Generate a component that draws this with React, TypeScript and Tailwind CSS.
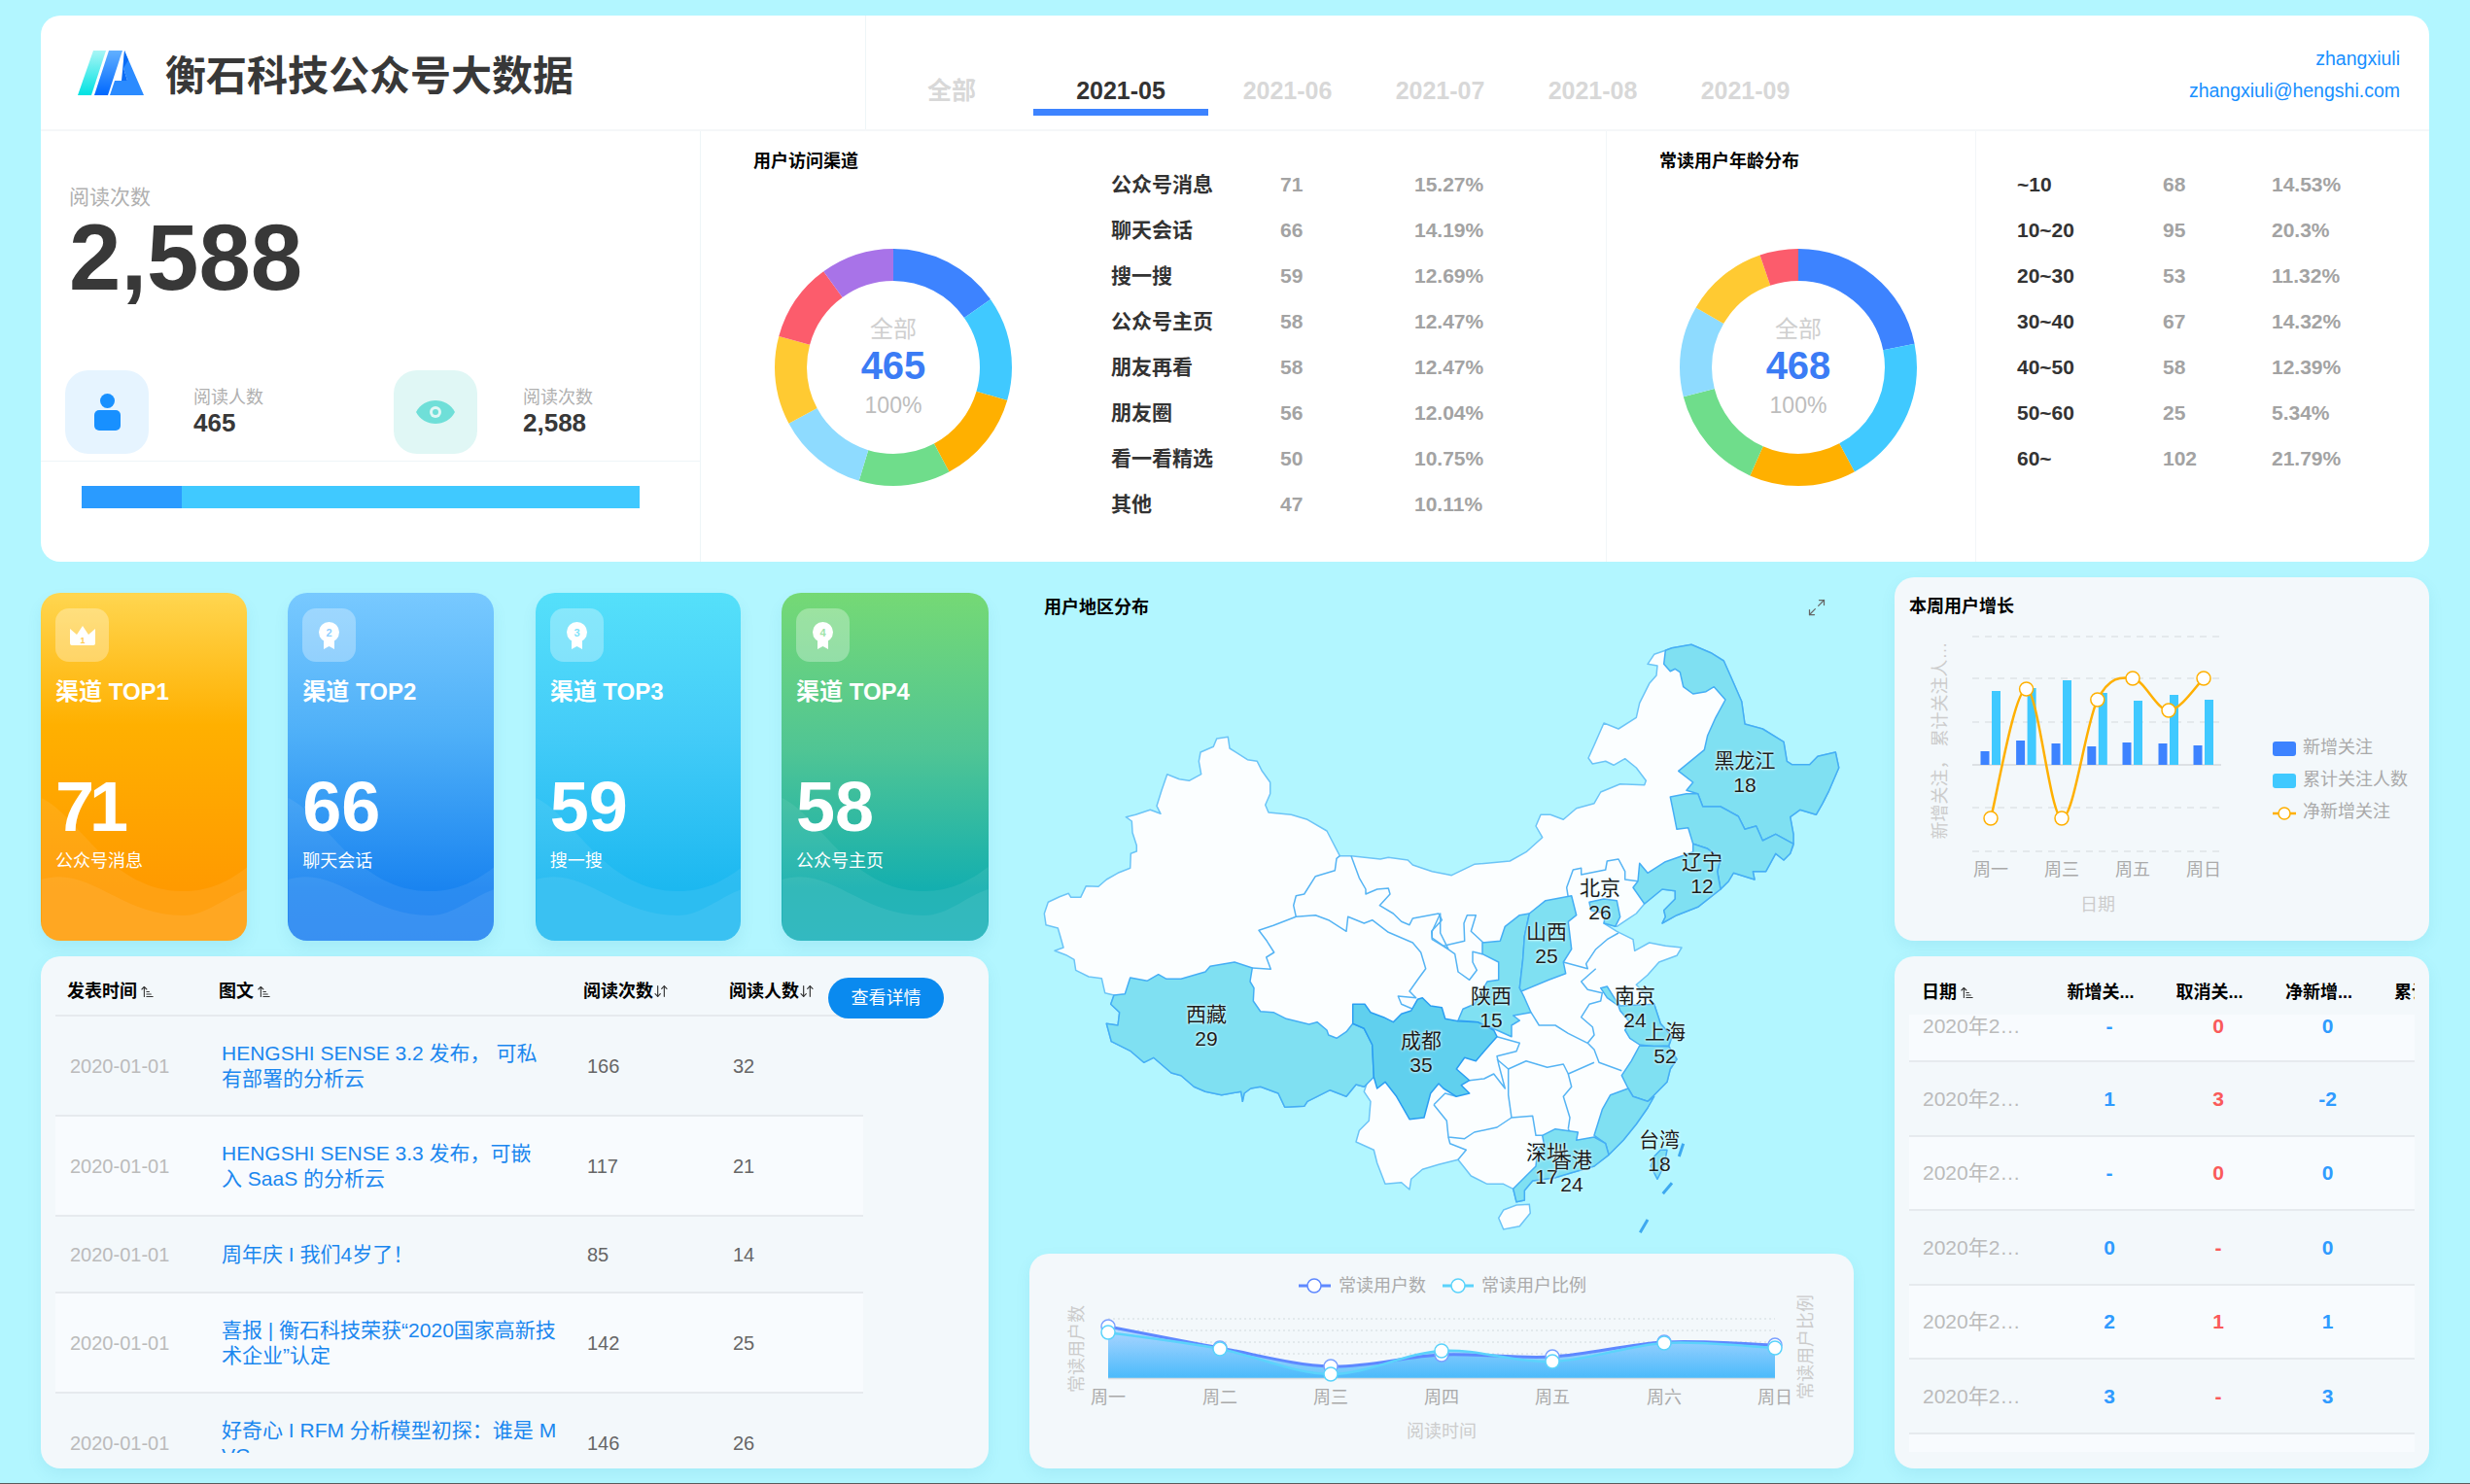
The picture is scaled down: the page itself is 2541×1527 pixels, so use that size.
import { ArrowDownUp, ArrowUpNarrowWide, Maximize2 } from "lucide-react";

const channels = [
  { name: "公众号消息", value: 71, pct: "15.27%", color: "#3d83ff" },
  { name: "聊天会话", value: 66, pct: "14.19%", color: "#40c9ff" },
  { name: "搜一搜", value: 59, pct: "12.69%", color: "#ffb000" },
  { name: "公众号主页", value: 58, pct: "12.47%", color: "#6fdd8b" },
  { name: "朋友再看", value: 58, pct: "12.47%", color: "#8edbff" },
  { name: "朋友圈", value: 56, pct: "12.04%", color: "#ffca32" },
  { name: "看一看精选", value: 50, pct: "10.75%", color: "#fc5c6c" },
  { name: "其他", value: 47, pct: "10.11%", color: "#a873e8" },
];

const ages = [
  { name: "~10", value: 68, pct: "14.53%" },
  { name: "10~20", value: 95, pct: "20.3%" },
  { name: "20~30", value: 53, pct: "11.32%" },
  { name: "30~40", value: 67, pct: "14.32%" },
  { name: "40~50", value: 58, pct: "12.39%" },
  { name: "50~60", value: 25, pct: "5.34%" },
  { name: "60~", value: 102, pct: "21.79%" },
];

const ageRing = [
  { value: 102, color: "#3d83ff" },
  { value: 95, color: "#40c9ff" },
  { value: 68, color: "#ffb000" },
  { value: 67, color: "#6fdd8b" },
  { value: 58, color: "#8edbff" },
  { value: 53, color: "#ffca32" },
  { value: 25, color: "#fc5c6c" },
];

const tops = [
  { rank: 1, value: 71, name: "公众号消息", w: "w-[212px]", track: "tracking-[-5px]", bg: "bg-[linear-gradient(180deg,#ffd650_0%,#ffb000_38%,#ff9a00_85%,#ff9a00_100%)]", num: "#ffc94f" },
  { rank: 2, value: 66, name: "聊天会话", w: "w-[212px]", track: "", bg: "bg-[linear-gradient(180deg,#78c9ff_0%,#4fb0f8_40%,#1a84f0_85%,#1a7ff0_100%)]", num: "#8fd0ff" },
  { rank: 3, value: 59, name: "搜一搜", w: "w-[211px]", track: "", bg: "bg-[linear-gradient(180deg,#55e0fa_0%,#44ccf8_40%,#1cb8f0_85%,#1cb8f0_100%)]", num: "#7fe4fa" },
  { rank: 4, value: 58, name: "公众号主页", w: "w-[213px]", track: "", bg: "bg-[linear-gradient(180deg,#75d975_0%,#50c594_45%,#14afaf_85%,#14afb8_100%)]", num: "#a0e4a8" },
];

const articles = [
  { title: "HENGSHI SENSE 3.2 发布， 可私\n有部署的分析云", reads: 166, people: 32, h: "h-[103px] bg-transparent" },
  { title: "HENGSHI SENSE 3.3 发布，可嵌\n入 SaaS 的分析云", reads: 117, people: 21, h: "h-[103px] bg-[#f8fbfe]" },
  { title: "周年庆 I 我们4岁了！", reads: 85, people: 14, h: "h-[79px] bg-transparent" },
  { title: "喜报 | 衡石科技荣获“2020国家高新技\n术企业”认定", reads: 142, people: 25, h: "h-[103px] bg-[#f8fbfe]" },
  { title: "好奇心 I RFM 分析模型初探：谁是 M\nVC", reads: 146, people: 26, h: "h-[103px] bg-transparent" },
];

const growthRows = [
  { a: "-", b: "0", c: "0", h: "h-[49px] items-start bg-[#f8fbfe]" },
  { a: "1", b: "3", c: "-2", h: "h-[77px] items-center" },
  { a: "-", b: "0", c: "0", h: "h-[76px] items-center bg-[#f8fbfe]" },
  { a: "0", b: "-", c: "0", h: "h-[77px] items-center" },
  { a: "2", b: "1", c: "1", h: "h-[76px] items-center bg-[#f8fbfe]" },
  { a: "3", b: "-", c: "3", h: "h-[77px] items-center" },
];

const mapLabels = [
  { n: "黑龙江", v: 18, c: "left-[736px] top-[201px]" },
  { n: "辽宁", v: 12, c: "left-[692px] top-[305px]" },
  { n: "北京", v: 26, c: "left-[587px] top-[332px]" },
  { n: "山西", v: 25, c: "left-[532px] top-[377px]" },
  { n: "南京", v: 24, c: "left-[623px] top-[443px]" },
  { n: "陕西", v: 15, c: "left-[475px] top-[443px]" },
  { n: "西藏", v: 29, c: "left-[182px] top-[462px]" },
  { n: "成都", v: 35, c: "left-[403px] top-[489px]" },
  { n: "上海", v: 52, c: "left-[654px] top-[480px]" },
  { n: "台湾", v: 18, c: "left-[648px] top-[591px]" },
  { n: "深圳", v: 17, c: "left-[532px] top-[604px]" },
  { n: "香港", v: 24, c: "left-[558px] top-[612px]" },
];

// crop coordinates (3x zooms of the map) to page coordinates
const at = (ox: number, oy: number, s: string) =>
  s
    .trim()
    .split(/\s+/)
    .map((p) => {
      const [x, y] = p.split(",").map(Number);
      return `${(ox + x / 3).toFixed(1)},${(oy + y / 3).toFixed(1)}`;
    })
    .join(" ");
const w = (s: string) => at(1070, 750, s);
const n = (s: string) => at(1480, 650, s);
const e = (s: string) => at(1400, 920, s);

const mainland = [
  w("580,25 585,60 640,95 670,100 685,130 710,165 710,200 695,235 705,258 775,265 825,280 885,315 925,392 960,392 1050,402 1075,397 1135,405 1150,420 1210,440 1260,450"),
  n("40,752 110,718 220,708 270,680 320,635 300,600 315,565 345,565 385,580 425,545 480,530 500,495 560,470 635,473 640,460 610,420 575,392 540,412 515,400 475,408 462,390 480,350 510,282 555,300 610,265 620,220 650,160 672,135 675,105 645,100 665,70 700,58 720,50 780,40 840,65 880,90 900,135 935,215 945,285 1000,300 1065,340 1075,400 1090,410 1145,410 1170,385 1225,372 1235,420 1205,490 1185,530 1165,565 1115,550 1085,572 1095,625 1095,660 1085,685 1065,705 1040,685 1010,740 970,740 975,765 910,745 895,770 870,795 800,850 735,875 690,900 700,880 695,860 730,825 730,800 690,795 635,840 610,870 580,890 550,910 510,900 550,925 600,950 605,985 650,960 700,970 750,975 735,1000 680,1020"),
  e("885,250 850,280 870,300 905,340 925,400 960,440 950,470 975,510 955,540 945,580 905,620 885,660 850,710 810,760 765,805 720,840 650,860 600,875 530,885 505,915 505,945 480,950 470,910 440,895 390,895 340,870 300,820 240,835 190,850 155,880 150,912 125,890 75,895 50,830 40,790 -15,765 -5,730 25,700 30,640 10,610 20,580"),
  w("1000,1105 975,1098 945,1135 895,1115 825,1150 815,1165 755,1168 735,1125 680,1105 650,1110 630,1125 625,1150 620,1120 560,1130 510,1120 475,1105 435,1070 405,1062 350,1015 320,1030 280,995 220,965 205,910 240,915 245,875 218,850 228,822 200,815 190,770 150,765 110,745 105,712 80,698 45,685 72,675 62,640 55,615 18,605 13,570 25,535 60,518 88,508 95,520 125,520 142,485 180,487 205,465 240,445 278,430 280,385 298,378 298,360 285,320 283,285 265,272 295,265 340,250 372,262 360,238 375,190 392,140 430,155 460,160 497,140 490,100 495,72 535,55 545,30"),
].join(" ");

const filled = [
  w("228,822 262,818 278,768 330,778 365,758 390,772 435,772 510,750 525,733 600,720 655,738 648,780 660,800 658,840 680,872 720,875 760,895 830,912 855,905 885,930 890,945 915,955 945,935 965,910 1000,925 1025,975 1030,1075 1000,1105 975,1098 945,1135 895,1115 825,1150 815,1165 755,1168 735,1125 680,1105 650,1110 630,1125 625,1150 620,1120 560,1130 510,1120 475,1105 435,1070 405,1062 350,1015 320,1030 280,995 220,965 205,910 240,915 245,875 218,850"),
  n("700,58 720,50 780,40 840,65 880,90 900,135 935,215 945,285 1000,300 1065,340 1075,400 1090,410 1145,410 1170,385 1225,372 1235,420 1205,490 1185,530 1165,565 1115,550 1085,572 1095,625 1095,655 1040,625 1000,645 980,600 945,610 925,570 870,540 815,540 800,500 765,490 785,465 740,430 820,365 830,320 855,265 885,210 850,170 825,185 785,192 755,170 745,125 730,115 715,122 695,100"),
  n("715,510 765,500 800,500 815,540 870,540 925,570 945,610 980,600 1000,645 1040,625 1095,655 1085,685 1065,705 1040,685 1010,740 970,740 975,765 910,745 895,770 870,795 860,740 870,700 830,670 785,655 770,605 735,610 725,560"),
  n("785,655 830,670 870,700 860,740 870,795 800,850 735,875 690,900 700,880 695,860 730,825 730,800 690,795 635,840 600,790 615,770 620,715 645,745 700,710 785,680"),
  n("510,825 550,830 560,880 545,910 510,900 515,870 470,860 465,835"),
  e("375,150 430,145 445,100 490,65 520,60 505,130 500,200 490,290 505,320 525,365 470,375 490,390 465,405 465,440 420,420 360,395 300,390 315,355 350,340 390,270 425,265 425,210 375,185"),
  e("520,60 570,20 650,5 665,65 640,85 650,170 625,210 632,245 580,265 495,300 490,290 500,200 505,130"),
  e("740,290 760,285 785,325 800,345 905,340 925,400 960,440 950,468 905,470 860,465 830,445 815,420 830,395 800,360 795,345 760,320"),
  e("860,468 950,470 975,510 955,540 945,580 905,620 885,640 840,625 825,600 805,560 835,515"),
  e("825,600 840,625 885,640 905,625 885,660 850,710 810,760 765,805 755,770 720,745 745,665 770,620"),
  e("560,745 600,725 670,735 665,760 720,750 755,770 765,805 720,840 650,860 600,875 530,885 505,915 505,945 480,950 470,910 500,880 540,840 545,790 565,770"),
  e("925,790 945,790 935,840 915,880 895,840 905,810"),
];

const sichuan = e("-25,340 12,340 30,365 70,380 100,395 125,370 155,360 175,325 190,320 215,345 250,350 260,385 300,392 360,395 410,420 420,440 385,480 355,515 320,505 295,540 335,575 310,590 335,615 295,625 255,600 240,585 215,615 195,690 150,695 110,625 75,580 50,600 40,565 35,465 10,415 -25,400");

const borders = [
  w("655,738 712,742 698,705 722,690 700,655 675,622 720,607 790,580 850,575 890,590 945,625 950,580 1000,600 1025,590 1075,628 1150,660 1175,690 1190,740 1165,775 1140,810 1160,830 1105,825 1115,850 1150,865"),
  w("790,580 782,545 790,515 815,510 850,455 910,437 915,400 925,392"),
  w("960,392 985,460 1005,495 1005,510 1040,495 1075,492 1080,510 1048,545 1090,570 1115,595 1140,605 1150,585 1230,570 1240,590 1208,625 1210,650 1260,680"),
  e("270,170 245,120 245,60 220,115 220,135 255,160 320,145 318,90 328,65 355,65 340,115 378,150"),
  e("255,160 290,185 300,240 335,265 358,235 345,210 345,178 375,185"),
  n("400,820 395,790 415,735 440,730 440,750 515,735 520,708 555,702 575,740 575,765 615,770"),
  e("795,120 760,140 725,170 695,215 700,230 625,210"),
  e("725,230 680,270 700,295 745,305 740,330 705,340 680,380 715,410 720,435 700,460 640,430 600,405 550,405 525,365"),
  e("700,460 720,480 735,520 805,545"),
  e("420,440 490,460 480,485 420,500 425,525 445,600 410,555 380,570 335,575"),
  e("720,520 640,555 625,525 575,535 510,515 455,540 420,510"),
  e("455,540 455,620 465,690 530,685 540,745 560,745"),
  e("640,555 650,595 625,625 645,690 640,725"),
  e("225,650 260,615 295,625"),
  e("225,650 265,700 270,750 320,755 350,735 420,720 465,690"),
  e("270,750 275,770 325,790 300,820"),
  e("660,760 640,725"),
];

const smooth = (pts: number[][]) => {
  let d = `M${pts[0][0]} ${pts[0][1]}`;
  for (let i = 0; i < pts.length - 1; i++) {
    const p0 = pts[Math.max(i - 1, 0)];
    const p1 = pts[i];
    const p2 = pts[i + 1];
    const p3 = pts[Math.min(i + 2, pts.length - 1)];
    d += ` C${p1[0] + (p2[0] - p0[0]) / 6} ${p1[1] + (p2[1] - p0[1]) / 6} ${p2[0] - (p3[0] - p1[0]) / 6} ${p2[1] - (p3[1] - p1[1]) / 6} ${p2[0]} ${p2[1]}`;
  }
  return d;
};

const weekX = [1140, 1255, 1369, 1483, 1597, 1712, 1826];
const readers = [1365, 1387, 1406, 1394, 1396, 1381, 1384].map((y, i) => [weekX[i], y]);
const ratio = [1371, 1388, 1414, 1390, 1401, 1382, 1387].map((y, i) => [weekX[i], y]);
const growthX = [2048, 2084.6, 2121, 2157.8, 2194, 2231, 2267];
const newFollow = [773, 762, 765, 768, 764, 765, 767];
const totalFollow = [711, 708, 700, 713, 721, 715, 720];
const netLine = [842, 709, 842, 720, 698, 731, 698].map((y, i) => [growthX[i], y]);

function Donut({ items, total }: { items: { value: number; color: string }[]; total: number }) {
  const r = 105.5;
  const c = 2 * Math.PI * r;
  const sum = items.reduce((s, it) => s + it.value, 0);
  let used = 0;
  return (
    <svg width="250" height="250" viewBox="0 0 250 250" className="block">
      <g transform="rotate(-90 125 125)">
        {items.map((it) => {
          const len = (it.value / sum) * c;
          const circle = (
            <circle
              key={it.color}
              cx="125"
              cy="125"
              r={r}
              fill="none"
              stroke={it.color}
              strokeWidth="33"
              strokeDasharray={`${len} ${c - len}`}
              strokeDashoffset={-used}
            />
          );
          used += len;
          return circle;
        })}
      </g>
      <text x="125" y="85" textAnchor="middle" dominantBaseline="central" fontSize="24" fill="#cfcfcf">全部</text>
      <text x="125" y="123" textAnchor="middle" dominantBaseline="central" fontSize="40" fontWeight="700" fill="#3b7cf5">{total}</text>
      <text x="125" y="164" textAnchor="middle" dominantBaseline="central" fontSize="23" fill="#bdbdbd">100%</text>
    </svg>
  );
}

function StatRows({ rows, labelW, valueW }: { rows: { name: string; value: number; pct: string }[]; labelW: string; valueW: string }) {
  return (
    <div className="flex flex-col">
      {rows.map((row) => (
        <div key={row.name} className="flex h-[47px] items-center text-[21px] font-bold">
          <div className={`${labelW} text-[#333]`}>{row.name}</div>
          <div className={`${valueW} text-[#a3a3a3]`}>{row.value}</div>
          <div className="text-[#a3a3a3]">{row.pct}</div>
        </div>
      ))}
    </div>
  );
}

function Logo() {
  return (
    <svg width="68" height="46" viewBox="0 0 68 46">
      <defs>
        <linearGradient id="logoCyan" x1="0" y1="0" x2="0" y2="1">
          <stop offset="0" stopColor="#a8f6f6" />
          <stop offset="1" stopColor="#00e2e2" />
        </linearGradient>
        <linearGradient id="logoBlue" x1="0" y1="0" x2="0" y2="1">
          <stop offset="0" stopColor="#62b0ff" />
          <stop offset="1" stopColor="#0068ff" />
        </linearGradient>
      </defs>
      <polygon points="0,46 16,0 29,0 14,46" fill="url(#logoCyan)" />
      <polygon points="17,46 32,0 46,0 31,46" fill="url(#logoBlue)" />
      <polygon points="48,0 68,46 33,46 38,31 51,31 47,18" fill="#2b8bff" />
      <polygon points="48,0 52,10 47,18 51,31 45,31" fill="#0a6cf5" />
    </svg>
  );
}

function TopIcon({ rank, color }: { rank: number; color: string }) {
  if (rank === 1) {
    return (
      <svg width="26" height="20" viewBox="0 0 26 20">
        <path d="M0 3 L7 9 L13 0 L19 9 L26 3 V18 Q26 20 24 20 H2 Q0 20 0 18 Z" fill="#fff" />
        <text x="13" y="18" textAnchor="middle" fontSize="9" fontWeight="700" fill={color}>1</text>
      </svg>
    );
  }
  return (
    <svg width="21" height="28" viewBox="0 0 21 28">
      <polygon points="5,16 16,16 16,28 10.5,25 5,28" fill="#fff" />
      <circle cx="10.5" cy="10.5" r="10.5" fill="#fff" />
      <text x="10.5" y="14.5" textAnchor="middle" fontSize="11" fontWeight="700" fill={color}>{rank}</text>
    </svg>
  );
}

function TopCard({ rank, value, name, w: width, track, bg, num }: (typeof tops)[number]) {
  return (
    <div className={`relative h-[358px] overflow-hidden rounded-[20px] px-[15px] pt-[16px] shadow-[0_8px_16px_rgba(0,110,150,0.08)] ${width} ${bg}`}>
      <svg className="absolute inset-0" width="213" height="358" viewBox="0 0 212 358">
        <path d="M0 211 C40 230 70 307 146 307 C175 307 195 295 212 282 V358 H0 Z" fill="#fff" opacity="0.07" />
        <path d="M0 295 C50 280 80 332 146 332 C170 332 190 312 212 305 V358 H0 Z" fill="#fff" opacity="0.07" />
      </svg>
      <div className="relative flex h-[55px] w-[55px] items-center justify-center rounded-[14px] bg-white/30">
        <TopIcon rank={rank} color={num} />
      </div>
      <div className="relative mt-[16px] text-[24px] leading-[30px] font-bold text-white">渠道 TOP{rank}</div>
      <div className={`relative mt-[67px] text-[72px] leading-[72px] font-bold text-white ${track}`}>{value}</div>
      <div className="relative mt-[8px] text-[18px] leading-[24px] text-white">{name}</div>
    </div>
  );
}

export default function App() {
  return (
    <div className="flex h-[1527px] w-[2541px] flex-col overflow-hidden bg-[#b2f6ff] font-['Liberation_Sans','Noto_Sans_CJK_SC',sans-serif]">
      <section className="mt-[16px] ml-[42px] flex h-[562px] w-[2457px] flex-col overflow-hidden rounded-[20px] bg-white">
        <header className="flex h-[119px] shrink-0 border-b-2 border-[#f5f7f9]">
          <div className="flex w-[849px] items-center gap-[22px] border-r border-[#eef5f8] pl-[38px]">
            <Logo />
            <h1 className="mt-[8px] text-[42px] leading-none font-bold text-[#383838]">衡石科技公众号大数据</h1>
          </div>
          <nav className="flex pl-[4px] text-[25px] leading-[28px] font-bold text-[#d8d8d8]">
            <div className="h-[103px] w-[168px] pt-[63px] text-center">全部</div>
            <div className="h-[103px] w-[180px] border-b-[7px] border-[#3d83ff] pt-[63px] text-center text-[#333]">2021-05</div>
            <div className="ml-[3px] h-[103px] w-[157px] pt-[63px] text-center">2021-06</div>
            <div className="h-[103px] w-[157px] pt-[63px] text-center">2021-07</div>
            <div className="h-[103px] w-[157px] pt-[63px] text-center">2021-08</div>
            <div className="h-[103px] w-[157px] pt-[63px] text-center">2021-09</div>
          </nav>
          <div className="ml-auto pt-[28px] pr-[30px] text-right text-[19.5px] leading-[33px] text-[#1890ff]">
            <div>zhangxiuli</div>
            <div>zhangxiuli@hengshi.com</div>
          </div>
        </header>
        <div className="flex flex-1">
          <div className="w-[679px] border-r border-[#eef5f8]">
            <div className="pt-[56px] pl-[29px] text-[21px] leading-[24px] text-[#b0b0b0]">阅读次数</div>
            <div className="pt-[2px] pl-[29px] text-[96px] leading-[96px] font-bold text-[#383838]">2,588</div>
            <div className="mt-[68px] flex pl-[25px]">
              <div className="flex h-[86px] w-[86px] items-center justify-center rounded-[24px] bg-[#e6f4ff]">
                <svg width="27" height="38" viewBox="0 0 27 38">
                  <ellipse cx="13.5" cy="7.5" rx="7.5" ry="7.5" fill="#1890ff" />
                  <rect x="0" y="17" width="27" height="21" rx="5" fill="#1890ff" />
                </svg>
              </div>
              <div className="ml-[46px] w-[120px] pt-[16px]">
                <div className="text-[18px] leading-[24px] text-[#b0b0b0]">阅读人数</div>
                <div className="text-[26px] leading-[28px] font-bold text-[#383838]">465</div>
              </div>
              <div className="ml-[86px] flex h-[86px] w-[86px] items-center justify-center rounded-[24px] bg-[#e0f7f5]">
                <svg width="40" height="24" viewBox="0 0 40 24">
                  <path d="M0 12 C8 -4 32 -4 40 12 C32 28 8 28 0 12 Z" fill="#6fdfd8" />
                  <circle cx="20" cy="12" r="6" fill="#e0f7f5" />
                  <circle cx="20" cy="12" r="3" fill="#6fdfd8" />
                </svg>
              </div>
              <div className="ml-[47px] pt-[16px]">
                <div className="text-[18px] leading-[24px] text-[#b0b0b0]">阅读次数</div>
                <div className="text-[26px] leading-[28px] font-bold text-[#383838]">2,588</div>
              </div>
            </div>
            <div className="mt-[7px] border-t border-[#eef5f8] pt-[25px] pl-[42px]">
              <div className="flex h-[23px] w-[574px] bg-[#40c9ff]">
                <div className="h-full w-[103px] bg-[#2a9bff]" />
              </div>
            </div>
          </div>
          <div className="flex w-[932px] border-r border-[#f2f6f8]">
            <div className="w-[422px]">
              <div className="pt-[21px] pl-[54px] text-[18px] leading-[20px] font-bold text-black">用户访问渠道</div>
              <div className="mt-[77px] ml-[73px]">
                <Donut items={channels} total={465} />
              </div>
            </div>
            <div className="pt-[31px]">
              <StatRows rows={channels} labelW="w-[174px]" valueW="w-[138px]" />
            </div>
          </div>
          <div className="w-[380px] border-r border-[#f2f6f8]">
            <div className="pt-[21px] pl-[54px] text-[18px] leading-[20px] font-bold text-black">常读用户年龄分布</div>
            <div className="mt-[77px] ml-[72px]">
              <Donut items={ageRing} total={468} />
            </div>
          </div>
          <div className="pt-[31px] pl-[42px]">
            <StatRows rows={ages} labelW="w-[150px]" valueW="w-[112px]" />
          </div>
        </div>
      </section>

      <div className="mt-[16px] ml-[42px] flex">
        <div className="flex w-[975px] flex-col gap-[16px] pt-[16px]">
          <div className="flex justify-between">
            {tops.map((t) => (
              <TopCard key={t.rank} {...t} />
            ))}
          </div>
          <div className="relative h-[527px] overflow-hidden rounded-[20px] bg-[#f3f8fb] pt-[12px] pl-[15px] shadow-[0_6px_16px_rgba(0,110,150,0.08)]">
            <div className="w-[831px]">
              <div className="grid h-[50px] grid-cols-[168px_375px_150px_138px] items-center border-b-2 border-[#e6eaee] text-[18px] font-bold text-black">
                <div className="flex items-center gap-[3px] pl-[12px]">发表时间<ArrowUpNarrowWide size={15} strokeWidth={1.75} color="#333" /></div>
                <div className="flex items-center gap-[3px]">图文<ArrowUpNarrowWide size={15} strokeWidth={1.75} color="#333" /></div>
                <div className="flex items-center">阅读次数<ArrowDownUp size={16} strokeWidth={1.75} color="#333" /></div>
                <div className="flex items-center">阅读人数<ArrowDownUp size={16} strokeWidth={1.75} color="#333" /></div>
              </div>
              <div className="h-[449px] overflow-hidden">
                {articles.map((a) => (
                  <div key={a.title} className={`grid grid-cols-[168px_375px_150px_138px] items-center border-b-2 border-[#e6eaee] text-[21px] ${a.h}`}>
                    <div className="pl-[15px] text-[20px] text-[#bbb]">2020-01-01</div>
                    <div className="max-h-[52px] pl-[3px] leading-[26px] whitespace-pre-line text-[#1b87ef]">{a.title}</div>
                    <div className="pl-[4px] text-[20px] text-[#666]">{a.reads}</div>
                    <div className="pl-[4px] text-[20px] text-[#666]">{a.people}</div>
                  </div>
                ))}
              </div>
            </div>
            <button className="absolute top-[22px] left-[810px] h-[42px] w-[119px] rounded-full bg-[#0a8aef] text-[18px] text-white">查看详情</button>
          </div>
        </div>

        <div className="ml-[42px] flex w-[848px] flex-col">
          <div className="relative h-[696px]">
            <svg className="absolute inset-0" width="848" height="696" viewBox="1059 594 848 696">
              <polygon points={mainland} fill="#fbfeff" stroke="#6cc4f7" strokeWidth="1.5" strokeLinejoin="round" />
              <polygon points={e("440,975 480,960 520,958 523,985 490,1025 440,1035 425,1000")} fill="#fbfeff" stroke="#6cc4f7" strokeWidth="1.5" />
              {borders.map((b) => (
                <polyline key={b} points={b} fill="none" stroke="#55b4f4" strokeWidth="1.5" strokeLinejoin="round" />
              ))}
              {filled.map((f) => (
                <polygon key={f} points={f} fill="#7fe0f2" stroke="#45aef5" strokeWidth="1.5" strokeLinejoin="round" />
              ))}
              <polygon points={sichuan} fill="#60d0ee" stroke="#2a9df2" strokeWidth="1.5" strokeLinejoin="round" />
              <polyline points={e("995,770 982,810")} fill="none" stroke="#3ea9f0" strokeWidth="3" />
              <polyline points={e("960,892 932,925")} fill="none" stroke="#3ea9f0" strokeWidth="3" />
              <polyline points={e("885,1005 862,1045")} fill="none" stroke="#3ea9f0" strokeWidth="3" />
            </svg>
            <div className="relative flex items-center justify-between pt-[21px] pr-[28px] pl-[15px] text-[18px] leading-[20px] font-bold text-black">
              <span>用户地区分布</span>
              <Maximize2 size={20} strokeWidth={1.5} color="#666" />
            </div>
            {mapLabels.map((l) => (
              <div key={l.n} className={`absolute -translate-x-1/2 -translate-y-1/2 text-center text-[21px] leading-[25px] text-[#1c1c1c] [text-shadow:0_0_3px_#e4fbff,0_0_3px_#e4fbff] ${l.c}`}>
                <div>{l.n}</div>
                <div>{l.v}</div>
              </div>
            ))}
          </div>
          <div className="h-[221px] overflow-hidden rounded-[20px] bg-[#f3f8fb] shadow-[0_6px_16px_rgba(0,110,150,0.08)]">
            <svg className="block" width="848" height="221" viewBox="1059 1290 848 221">
              <defs>
                <linearGradient id="areaFill" x1="0" y1="0" x2="0" y2="1">
                  <stop offset="0" stopColor="#a3d2ff" />
                  <stop offset="1" stopColor="#3fb6fb" />
                </linearGradient>
              </defs>
              <line x1="1336" y1="1323" x2="1369" y2="1323" stroke="#5e88ff" strokeWidth="3" />
              <circle cx="1352" cy="1323" r="7" fill="#fff" stroke="#5e88ff" strokeWidth="1.5" />
              <text x="1377" y="1323" dominantBaseline="central" fontSize="18" fill="#aaa">常读用户数</text>
              <line x1="1484" y1="1323" x2="1516" y2="1323" stroke="#5bd3fb" strokeWidth="3" />
              <circle cx="1500" cy="1323" r="7" fill="#fff" stroke="#5bd3fb" strokeWidth="1.5" />
              <text x="1524" y="1323" dominantBaseline="central" fontSize="18" fill="#aaa">常读用户比例</text>
              {[1357, 1369, 1381, 1393].map((y) => (
                <line key={y} x1="1140" x2="1826" y1={y} y2={y} stroke="#dde3e8" strokeWidth="1.5" strokeDasharray="2 3" />
              ))}
              <path d={`${smooth(readers)} L1826 1418 L1140 1418 Z`} fill="url(#areaFill)" opacity="0.75" />
              <path d={`${smooth(ratio)} L1826 1418 L1140 1418 Z`} fill="url(#areaFill)" opacity="0.75" />
              <line x1="1140" x2="1826" y1="1418.5" y2="1418.5" stroke="#d5dbe0" strokeWidth="1.5" />
              <path d={smooth(readers)} fill="none" stroke="#5e88ff" strokeWidth="3" />
              <path d={smooth(ratio)} fill="none" stroke="#5bd3fb" strokeWidth="2.5" />
              {readers.map(([x, y]) => (
                <circle key={x} cx={x} cy={y} r="7" fill="#fff" stroke="#7aa0ff" strokeWidth="1.5" />
              ))}
              {ratio.map(([x, y]) => (
                <circle key={x} cx={x} cy={y} r="7" fill="#fff" stroke="#5bd3fb" strokeWidth="1.5" />
              ))}
              {["周一", "周二", "周三", "周四", "周五", "周六", "周日"].map((d, i) => (
                <text key={d} x={weekX[i]} y="1438" textAnchor="middle" dominantBaseline="central" fontSize="18" fill="#aaa">{d}</text>
              ))}
              <text x="1483" y="1473" textAnchor="middle" dominantBaseline="central" fontSize="18" fill="#ccc">阅读时间</text>
              <text x="1108" y="1388" transform="rotate(-90 1108 1388)" textAnchor="middle" dominantBaseline="central" fontSize="18" fill="#ccc">常读用户数</text>
              <text x="1858" y="1386" transform="rotate(-90 1858 1386)" textAnchor="middle" dominantBaseline="central" fontSize="18" fill="#ccc">常读用户比例</text>
            </svg>
          </div>
        </div>

        <div className="ml-[42px] flex w-[550px] flex-col gap-[16px]">
          <div className="h-[374px] rounded-[20px] bg-[#f3f8fb] shadow-[0_6px_16px_rgba(0,110,150,0.08)]">
            <div className="h-[46px] pt-[20px] pl-[15px] text-[18px] leading-[20px] font-bold text-black">本周用户增长</div>
            <svg className="block" width="550" height="328" viewBox="1949 640 550 328">
              {[655, 698, 743, 831, 876].map((y) => (
                <line key={y} x1="2029" x2="2285" y1={y} y2={y} stroke="#dfe4e8" strokeWidth="1.5" strokeDasharray="7 6" />
              ))}
              <line x1="2029" x2="2285" y1="787" y2="787" stroke="#d5d9dd" strokeWidth="1.5" />
              {growthX.map((x, i) => (
                <g key={x}>
                  <rect x={x - 10.5} y={newFollow[i]} width="9" height={787 - newFollow[i]} fill="#3d83ff" />
                  <rect x={x + 1} y={totalFollow[i]} width="9" height={787 - totalFollow[i]} fill="#40c9ff" />
                </g>
              ))}
              <path d={smooth(netLine)} fill="none" stroke="#ffb000" strokeWidth="2.5" />
              {netLine.map(([x, y]) => (
                <circle key={x} cx={x} cy={y} r="7" fill="#fff" stroke="#ffb000" strokeWidth="1.5" />
              ))}
              {[["周一", 2048], ["周三", 2121], ["周五", 2194], ["周日", 2267]].map(([d, x]) => (
                <text key={d} x={x} y="895" textAnchor="middle" dominantBaseline="central" fontSize="18" fill="#aaa">{d}</text>
              ))}
              <text x="2158" y="931" textAnchor="middle" dominantBaseline="central" fontSize="18" fill="#ccc">日期</text>
              <text x="1996" y="762" transform="rotate(-90 1996 762)" textAnchor="middle" dominantBaseline="central" fontSize="18" fill="#ccc">新增关注， 累计关注人…</text>
              <rect x="2338" y="763" width="24" height="15" rx="3" fill="#3d83ff" />
              <text x="2369" y="769" dominantBaseline="central" fontSize="18" fill="#aaa">新增关注</text>
              <rect x="2338" y="796" width="24" height="15" rx="3" fill="#40c9ff" />
              <text x="2369" y="802" dominantBaseline="central" fontSize="18" fill="#aaa">累计关注人数</text>
              <line x1="2338" x2="2362" y1="837" y2="837" stroke="#ffb000" strokeWidth="2.5" />
              <circle cx="2350" cy="837" r="6" fill="#fff" stroke="#ffb000" strokeWidth="1.5" />
              <text x="2369" y="835" dominantBaseline="central" fontSize="18" fill="#aaa">净新增关注</text>
            </svg>
          </div>
          <div className="h-[527px] overflow-hidden rounded-[20px] bg-[#f3f8fb] pt-[14px] pl-[15px] shadow-[0_6px_16px_rgba(0,110,150,0.08)]">
            <div className="w-[520px] overflow-hidden">
              <div className="grid h-[46px] grid-cols-[150px_112px_112px_113px_60px] items-center text-[18px] font-bold text-black">
                <div className="flex items-center gap-[3px] pl-[13px]">日期<ArrowUpNarrowWide size={15} strokeWidth={1.75} color="#333" /></div>
                <div className="pr-[18px] text-center">新增关...</div>
                <div className="pr-[18px] text-center">取消关...</div>
                <div className="pr-[18px] text-center">净新增...</div>
                <div className="pl-[12px] whitespace-nowrap">累计</div>
              </div>
              {growthRows.map((r, i) => (
                <div key={i} className={`grid grid-cols-[150px_112px_112px_113px_60px] border-b-2 border-[#e6eaee] text-[21px] leading-[24px] font-bold ${r.h}`}>
                  <div className="w-[118px] truncate pl-[14px] font-normal text-[#bbb]">2020年2月3日</div>
                  <div className="text-center text-[#2f9bff]">{r.a}</div>
                  <div className="text-center text-[#fa5a5a]">{r.b}</div>
                  <div className="text-center text-[#2f9bff]">{r.c}</div>
                  <div />
                </div>
              ))}
              <div className="h-[18px] bg-[#f8fbfe]" />
            </div>
          </div>
        </div>
      </div>
      <div className="mt-auto h-[1px] shrink-0 bg-[#5a5a5a]" />
    </div>
  );
}
